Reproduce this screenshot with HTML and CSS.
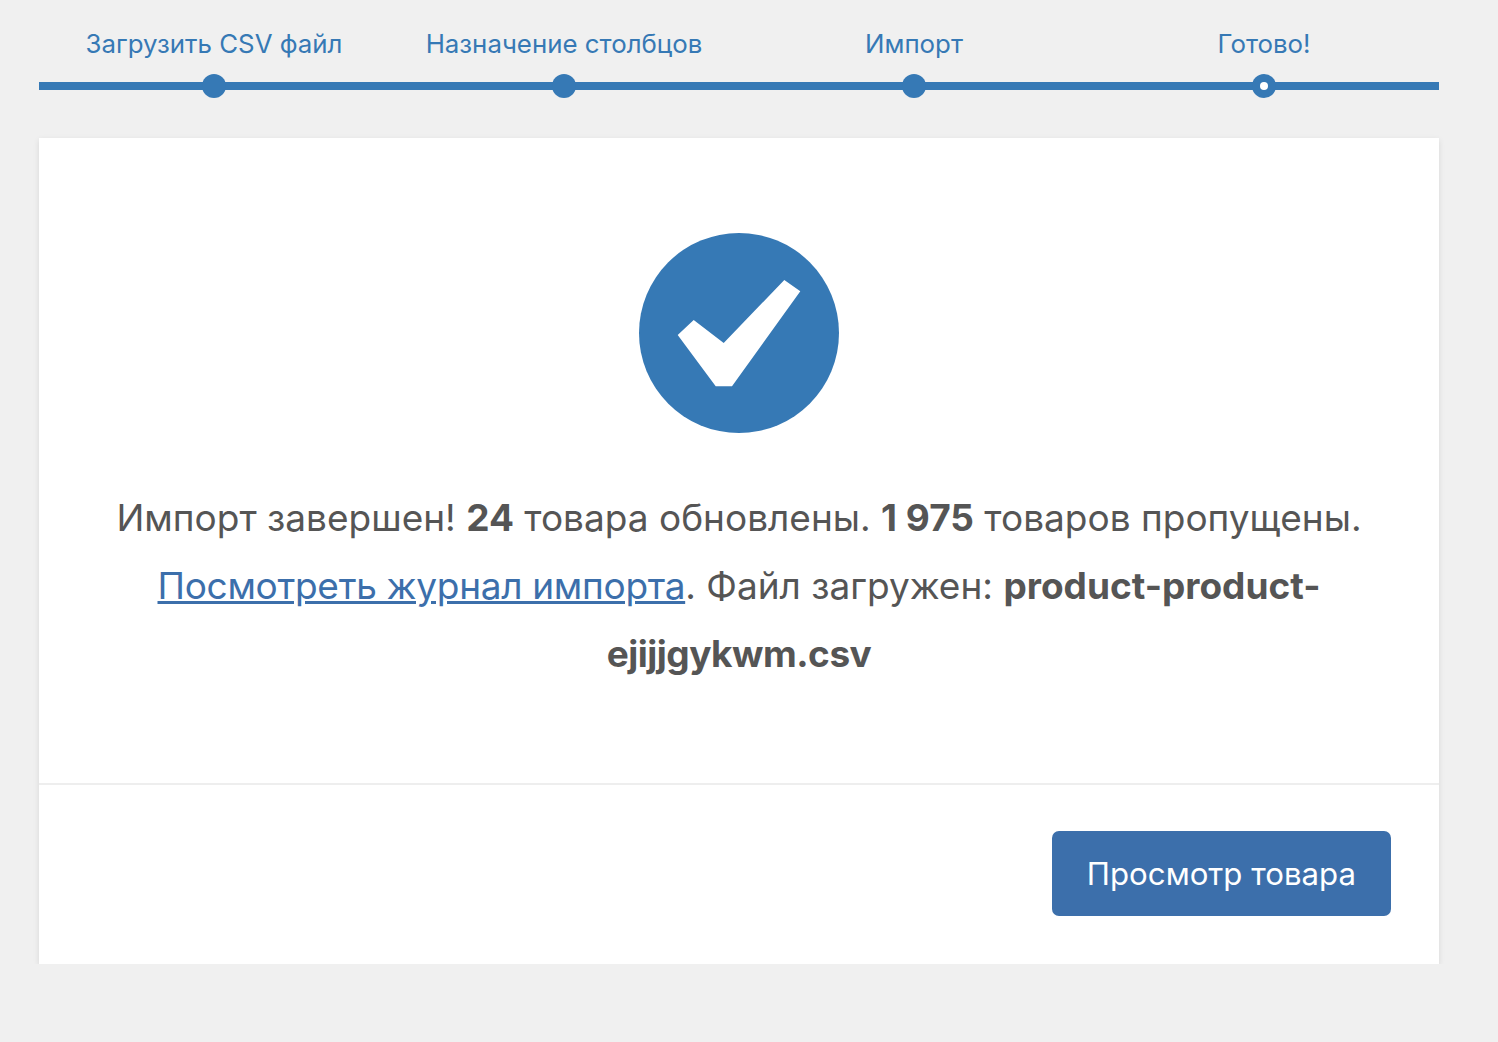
FILE: index.html
```html
<!DOCTYPE html>
<html lang="ru">
<head>
  <meta charset="UTF-8" />
  <meta name="viewport" content="width=device-width, initial-scale=1.0"/>
  <title>Импорт товаров</title>
  <link rel="stylesheet" href="styles.css">
</head>
<body>
  <div class="wrapper">
    <ol class="steps">
      <li class="step">Загрузить CSV файл</li>
      <li class="step">Назначение столбцов</li>
      <li class="step">Импорт</li>
      <li class="step step-active">Готово!</li>
    </ol>

    <div class="card">
      <section class="done">
        <svg class="done-icon" width="200" height="200" viewBox="0 0 200 200" aria-hidden="true">
          <circle cx="100" cy="100" r="100" fill="#3679b5"/>
          <polygon fill="#fff" points="38.7,102 54.7,87 84.7,110 145.3,47 161.3,58.3 93,153.3 76.7,153.3"/>
        </svg>
        <p class="done-text">
          Импорт завершен! <strong>24</strong> товара обновлены. <strong>1 975</strong> товаров пропущены.
          <a href="#">Посмотреть журнал импорта</a>. Файл загружен: <strong>product-product-<span class="file-tail">ejijjgykwm.csv</span></strong>
        </p>
      </section>
      <div class="actions">
        <a class="button" href="#">Просмотр товара</a>
      </div>
    </div>
  </div>
</body>
</html>
```

FILE: styles.css
```css
html, body {
  margin: 0;
  padding: 0;
}

body {
  font-family: Inter, 'Noto Sans', sans-serif;
  background: #f0f0f0;
  color: #555;
}

.wrapper {
  width: 1400px;
  margin-left: 39px;
  padding-top: 24px;
}

.steps {
  display: flex;
  list-style: none;
  margin: 0 0 48px;
  padding: 0;
}

.step {
  position: relative;
  flex: 1;
  height: 58px;
  line-height: 40px;
  text-align: center;
  font-size: 25.85px;
  color: #3679b5;
  border-bottom: 8px solid #3679b5;
}

.step::before {
  content: "";
  position: absolute;
  left: 50%;
  bottom: -16px;
  width: 24px;
  height: 24px;
  margin-left: -12px;
  border-radius: 50%;
  background: #3679b5;
}

.step-active::after {
  content: "";
  position: absolute;
  left: 50%;
  bottom: -8px;
  width: 8px;
  height: 8px;
  margin-left: -4px;
  border-radius: 50%;
  background: #fff;
}

.card {
  background: #fff;
  box-shadow: 0 2px 6px rgba(0, 0, 0, 0.1);
}

.done {
  padding: 95px 48px 0;
  height: 550px;
  text-align: center;
  border-bottom: 2px solid #eee;
}

.done-icon {
  display: block;
  margin: 0 auto;
}

.done-text {
  margin: 51px 0 0;
  font-size: 37px;
  line-height: 68px;
}

.done-text a {
  color: #3c6fab;
  letter-spacing: -0.3px;
}

.file-tail {
  letter-spacing: -0.5px;
}

.actions {
  display: flex;
  justify-content: flex-end;
  padding: 46px 48px 48px;
}

.button {
  padding: 0 35px;
  height: 85px;
  line-height: 87px;
  font-size: 31.2px;
  color: #fff;
  text-decoration: none;
  background: #3c6fab;
  border-radius: 7px;
}
```
